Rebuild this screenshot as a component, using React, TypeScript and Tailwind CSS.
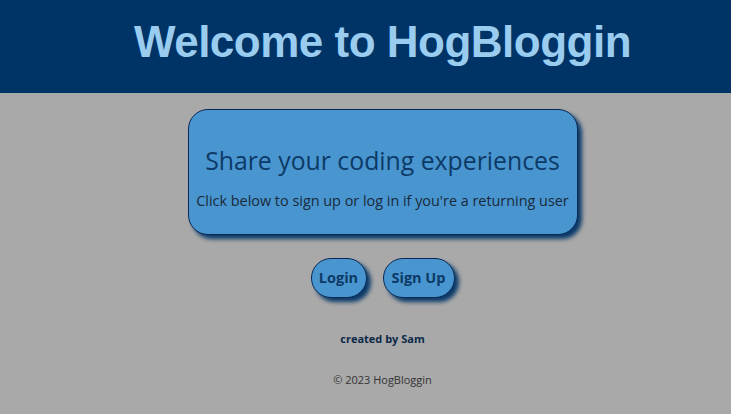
import React from "react";

export default function App() {
  return (
    <div className="min-h-[414px] w-full bg-[#a9a9a9] font-['Open_Sans',sans-serif]">
      <header className="h-[93px] bg-[#003366] flex items-center justify-center pl-[34px]">
        <h1 className="text-[44px] font-black text-[#99ccee] font-['Liberation_Sans',sans-serif] tracking-[-0.5px] leading-none pb-[9px]">
          Welcome to HogBloggin
        </h1>
      </header>
      <main className="flex flex-col items-center pt-[16px] pl-[34px]">
        <div className="w-[390px] h-[126px] rounded-[20px] border border-[#0a2a55] bg-[#4895d0] shadow-[4px_4px_4px_#0a3a6a] flex flex-col items-center justify-center pt-[12px]">
          <h2 className="text-[24.8px] text-[#0d3a66] leading-none">Share your coding experiences</h2>
          <p className="text-[14.4px] text-[#1a2a3a] mt-[21px] leading-none">Click below to sign up or log in if you're a returning user</p>
        </div>
        <div className="flex gap-[16px] mt-[23px]">
          <button className="h-[40px] w-[56px] rounded-[20px] border border-[#0a2a55] bg-[#4895d0] shadow-[4px_4px_4px_#0a3a6a] text-[14.5px] font-bold text-[#0d3a66]">Login</button>
          <button className="h-[40px] w-[72px] rounded-[20px] border border-[#0a2a55] bg-[#4895d0] shadow-[4px_4px_4px_#0a3a6a] text-[14.5px] font-bold text-[#0d3a66]">Sign Up</button>
        </div>
        <p className="mt-[33px] text-[11px] font-bold text-[#0d2a4a]">created by Sam</p>
        <p className="mt-[24px] text-[11px] text-[#333]">© 2023 HogBloggin</p>
      </main>
    </div>
  );
}
